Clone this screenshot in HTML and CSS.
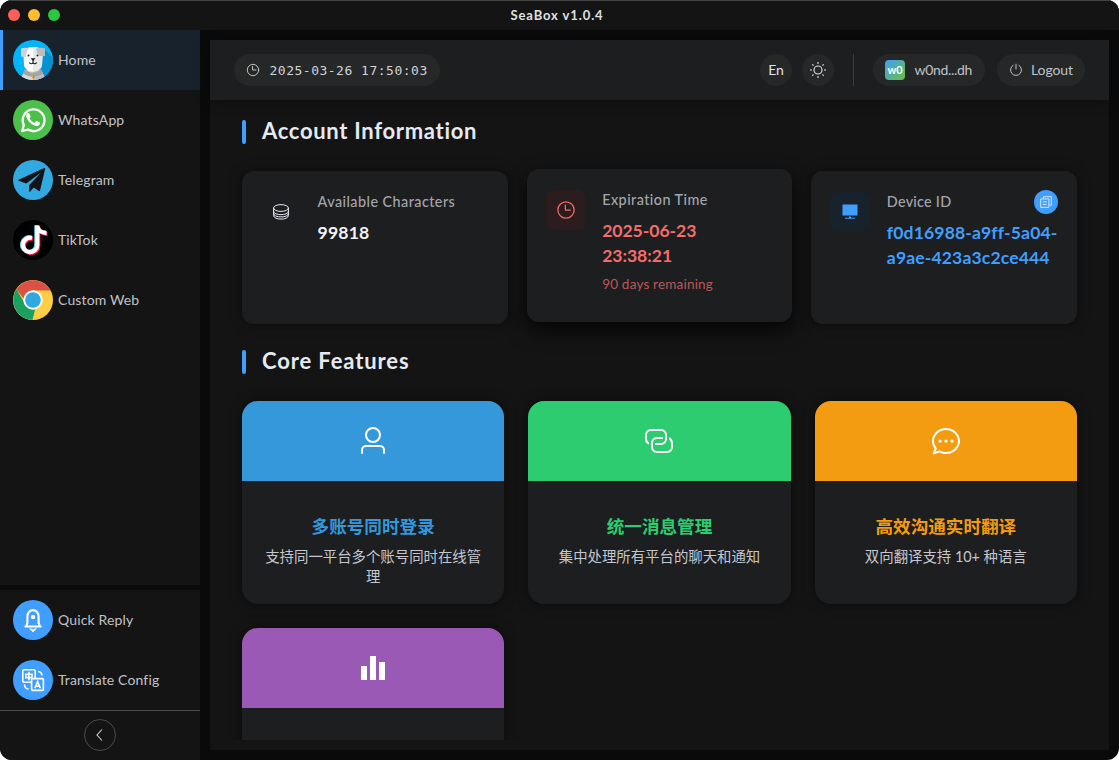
FILE: index.html
```html
<!DOCTYPE html>
<html lang="en">
<head>
<meta charset="utf-8">
<title>SeaBox v1.0.4</title>
<link rel="stylesheet" href="styles.css">
</head>
<body>
<div class="window">
  <header class="titlebar">
    <div class="lights"><i class="light red"></i><i class="light yellow"></i><i class="light green"></i></div>
    <span class="app-title">SeaBox v1.0.4</span>
  </header>
  <div class="body">
    <aside class="sidebar">
      <nav class="menu menu-top">
        <a class="item active">
          <svg class="avatar" viewBox="0 0 40 40">
            <defs><clipPath id="round"><circle cx="20" cy="20" r="20"/></clipPath></defs>
            <g clip-path="url(#round)">
              <rect width="40" height="40" fill="#03b5f8"/>
              <path d="M31 9l9 9v22H26z" fill="#0793cf"/>
              <path d="M8 40c1-5 3-9 7-11h10c4 2 6 6 8 11z" fill="#d9d9d9"/>
              <path d="M20 29h5c4 2 6 6 8 11H20z" fill="#bdbdbd"/>
              <path d="M12 29c4 5 12 5 16 0l2 4c-5 5-15 5-20 0z" fill="#a5a5a5"/>
              <path d="M10.500 16c0-6 3-8 6.500-9h6c4 1 6.500 3 6.500 9l-.5 9c-.5 4-5 6.500-9 6.500s-8.500-2.500-9-6.500z" fill="#fff"/>
              <path d="M20 7h3c4 1 6.500 3 6.500 9l-.5 9c-.5 4-5 6.500-9 6.500z" fill="#e8e8e8"/>
              <path d="M8 8.500c3-1 6-1 8 0-2 2-3 5-3 8.500l-5-.5z" fill="#d3d3d3"/>
              <path d="M23 8.500c3-1 7-1 9 0v7.500h-5c-2-1-4-4-4-7.500z" fill="#bdbdbd"/>
              <circle cx="15.500" cy="15.500" r="1" fill="#26292c"/><circle cx="24.500" cy="15.500" r="1" fill="#26292c"/>
              <path d="M17.500 18.300h5L20 21z" fill="#161616"/>
              <path d="M20 20v3M16.500 22.300c.5 2 3 2 3.500 0 .5 2 3 2 3.500 0" fill="none" stroke="#222" stroke-width="1.100"/>
              <path d="M20 34l2 2-2 3.500-2-3.500z" fill="#f0a72e"/><path d="M20 34l2 2-2 3.500z" fill="#4ab2e8"/>
            </g>
          </svg>
          <span>Home</span>
        </a>
        <a class="item">
          <svg class="avatar" viewBox="0 0 40 40">
            <circle cx="20" cy="20" r="20" fill="#4bc04b"/>
            <path d="M9.200 31l1.600-6A10.900 10.900 0 1 1 15 29.600z" fill="none" stroke="#fff" stroke-width="2.300" stroke-linejoin="round"/>
            <path d="M16.300 13.800c-.4-.8-.8-.8-1.300-.7-1.400.5-2.100 1.700-1.800 3.400.5 2.400 2.500 5.300 5.400 7.400 2.600 1.800 5.200 2.700 6.900 1.700 1.200-.7 1.600-1.800 1.400-2.800-.1-.4-3.100-1.900-3.600-1.800-.7.200-1.300 1.900-1.900 1.900-1.300-.2-4.300-2.900-4.800-4.300-.1-.5 1-1.400 1-2.100 0-.4-1-2.200-1.300-2.700z" fill="#fff"/>
          </svg>
          <span>WhatsApp</span>
        </a>
        <a class="item">
          <svg class="avatar" viewBox="0 0 40 40">
            <circle cx="20" cy="20" r="20" fill="#32a9e0"/>
            <path d="M5.600 19.800L31.300 8.100c.7-.3 1 .1.900.7L27 30.600c-.1.600-.6.700-1.100.4l-5.200-3.500-3.700 4.200c-.4.400-.9.200-.9-.3v-6.200L28 12.500 13.300 23.500 5.600 20.700c-.5-.2-.5-.6 0-.9z" fill="#121416"/>
          </svg>
          <span>Telegram</span>
        </a>
        <a class="item">
          <svg class="avatar" viewBox="0 0 40 40">
            <circle cx="20" cy="20" r="20" fill="#000"/>
            <g fill="none" stroke-width="4.200">
              <path d="M19 18a7.200 7.200 0 1 0 5.300 6.900V5.600c.3 4 3.500 7.300 9.200 7.500" stroke="#69c9d0" transform="translate(-1 -.4)"/>
              <path d="M19 18a7.200 7.200 0 1 0 5.300 6.900V5.600c.3 4 3.500 7.300 9.200 7.500" stroke="#fb1d53" transform="translate(1 1)"/>
              <path d="M19 18a7.200 7.200 0 1 0 5.300 6.900V5.600c.3 4 3.500 7.300 9.200 7.500" stroke="#fff"/>
            </g>
          </svg>
          <span>TikTok</span>
        </a>
        <a class="item">
          <svg class="avatar" viewBox="0 0 40 40">
            <circle cx="20" cy="20" r="20" fill="#ffce44"/>
            <path d="M3.500 9.300A20 20 0 0 1 37.600 10.500H20l-9.500 8z" fill="#dd5144"/>
            <path d="M3.500 9.300A20 20 0 0 0 19.500 40l2.700-11L12 24z" fill="#1aa15f"/>
            <circle cx="20" cy="20" r="9.700" fill="#fff"/><circle cx="20" cy="20" r="7.800" fill="#30a8e0"/>
          </svg>
          <span>Custom Web</span>
        </a>
      </nav>
      <nav class="menu menu-bottom">
        <a class="item">
          <svg class="avatar" viewBox="0 0 40 40">
            <circle cx="20" cy="20" r="20" fill="#409eff"/>
            <path d="M13.400 25.500l1-2.500v-6.500c0-3.500 2.400-6.400 5.600-6.400s5.600 2.900 5.600 6.400V23l1 2.500M11.500 26.500h17" fill="none" stroke="#fff" stroke-width="2.100"/>
            <path d="M15.800 28.600h8.400L20 32.300z" fill="#fff"/><path d="M18.500 28h3L20 29.700z" fill="#409eff"/>
            <circle cx="20" cy="17" r="2.200" fill="#fff"/>
          </svg>
          <span>Quick Reply</span>
        </a>
        <a class="item">
          <svg class="avatar" viewBox="0 0 40 40">
            <circle cx="20" cy="20" r="20" fill="#409eff"/>
            <g fill="none" stroke="#fff" stroke-width="1.600">
              <rect x="9.800" y="9.800" width="12.400" height="12.400" rx="1.200"/>
              <path d="M12.800 14.200h6.200v3.400h-6.200zM15.900 11.800v8.400"/>
              <path d="M25 11.500c2.400.2 3.800 1.600 4 4M11.500 24.500c.2 2.800 1.400 4.300 4 4.500"/>
              <rect x="18.600" y="18.600" width="11.800" height="11.800" rx="1" fill="#409eff"/>
              <path d="M21.900 28.300l2.700-6.800 2.700 6.800M22.700 26.300h3.800"/>
            </g>
          </svg>
          <span>Translate Config</span>
        </a>
      </nav>
      <div class="collapse">
        <button class="collapse-btn"><svg viewBox="0 0 16 16"><path d="M10 2.500L5 8l5 5.500"/></svg></button>
      </div>
    </aside>

    <main class="main">
      <div class="topbar">
        <div class="pill time">
          <svg class="ico13" viewBox="0 0 1024 1024"><g class="line"><circle cx="512" cy="512" r="416"/><path d="M480 256v256h256"/></g></svg>
          <span>2025-03-26 17:50:03</span>
        </div>
        <div class="actions">
          <div class="round lang"><span>En</span></div>
          <div class="round sun">
            <svg class="ico16" viewBox="0 0 16 16"><circle cx="8" cy="8" r="4"/><path d="M8 0v2M8 14v2M0 8h2M14 8h2M2.300 2.300l1.200 1.200M12.500 12.500l1.200 1.200M2.300 13.700l1.200-1.200M12.500 3.500l1.200-1.200"/></svg>
          </div>
          <div class="divider"></div>
          <div class="pill user"><b class="badge">w0</b><span>w0nd...dh</span></div>
          <div class="pill logout">
            <svg class="ico14" viewBox="0 0 14 14"><path d="M4.500 2.200a5.400 5.400 0 1 0 5 0M7 .8v5.600"/></svg>
            <span>Logout</span>
          </div>
        </div>
      </div>

      <div class="content">
        <h2 class="section-title"><i class="bar"></i><span>Account Information</span></h2>
        <section class="account">
          <article class="info">
            <div class="info-icon">
              <svg class="coins" viewBox="0 0 16 16"><ellipse cx="8" cy="4" rx="7.400" ry="3.400"/><path d="M.6 4v7.500C.6 16.300 15.400 16.300 15.400 11.500V4M.6 7.200c0 4.600 14.800 4.600 14.800 0M.6 9.600c0 4.400 14.800 4.400 14.800 0"/></svg>
            </div>
            <div class="info-text">
              <div class="label"><span>Available Characters</span></div>
              <div class="value">99818</div>
            </div>
          </article>
          <article class="info raised">
            <div class="info-icon red-box">
              <svg class="ico20" viewBox="0 0 1024 1024"><g class="line"><circle cx="512" cy="512" r="416"/><path d="M480 256v256h256"/></g></svg>
            </div>
            <div class="info-text">
              <div class="label"><span>Expiration Time</span></div>
              <div class="value danger">2025-06-23<br>23:38:21</div>
              <div class="remaining">90 days remaining</div>
            </div>
          </article>
          <article class="info">
            <div class="info-icon blue-box">
              <svg class="ico20" viewBox="0 0 20 20"><path d="M2.500 2.500h15v11h-15zM9 14.500h2v1.200h4v1H5v-1h4z" fill="#409eff"/></svg>
            </div>
            <div class="info-text">
              <div class="label device"><span>Device ID</span>
                <button class="copy"><svg viewBox="0 0 12 12"><path d="M3.300 2.600V.7h8v8.500H9.600M.7 2.900h8.200v8.400H.7zM2.700 5.800h4.200M2.700 8.400h4.200"/></svg></button>
              </div>
              <div class="value primary">f0d16988-a9ff-5a04-<br>a9ae-423a3c2ce444</div>
            </div>
          </article>
        </section>

        <h2 class="section-title second"><i class="bar"></i><span>Core Features</span></h2>
        <section class="features">
          <article class="feature blue">
            <div class="cover"><svg class="ico32" viewBox="0 0 1024 1024"><path d="M512 512a192 192 0 1 0 0-384 192 192 0 0 0 0 384m0 64a256 256 0 1 1 0-512 256 256 0 0 1 0 512m320 320v-96a96 96 0 0 0-96-96H288a96 96 0 0 0-96 96v96a32 32 0 1 1-64 0v-96a160 160 0 0 1 160-160h448a160 160 0 0 1 160 160v96a32 32 0 1 1-64 0"/></svg></div>
            <div class="copybox"><h3>多账号同时登录</h3><p>支持同一平台多个账号同时在线管理</p></div>
          </article>
          <article class="feature green">
            <div class="cover"><svg class="ico32" viewBox="0 0 1024 1024"><path d="M640 384v64H448a128 128 0 0 0-128 128v128a128 128 0 0 0 128 128h320a128 128 0 0 0 128-128V576a128 128 0 0 0-64-110.848V394.880c74.560 26.368 128 97.472 128 181.056v128a192 192 0 0 1-192 192H448a192 192 0 0 1-192-192V576a192 192 0 0 1 192-192z"/><path d="M384 640v-64h192a128 128 0 0 0 128-128V320a128 128 0 0 0-128-128H256a128 128 0 0 0-128 128v128a128 128 0 0 0 64 110.848v70.272A192.064 192.064 0 0 1 64 448V320a192 192 0 0 1 192-192h320a192 192 0 0 1 192 192v128a192 192 0 0 1-192 192z"/></svg></div>
            <div class="copybox"><h3>统一消息管理</h3><p>集中处理所有平台的聊天和通知</p></div>
          </article>
          <article class="feature orange">
            <div class="cover"><svg class="ico32" viewBox="0 0 1024 1024"><path d="m174.720 855.680 135.296-45.120 23.680 11.840C388.096 849.536 448.576 864 512 864c211.840 0 384-166.784 384-352S723.840 160 512 160 128 326.784 128 512c0 69.120 24.960 139.264 70.848 199.232l22.080 28.800-46.272 115.584zm-45.248 82.560A32 32 0 0 1 89.600 896l58.368-145.920C94.720 680.320 64 596.864 64 512 64 299.904 256 96 512 96s448 203.904 448 416-192 416-448 416a461.056 461.056 0 0 1-206.912-48.384l-175.616 58.560z"/><circle cx="320" cy="512" r="52"/><circle cx="512" cy="512" r="52"/><circle cx="704" cy="512" r="52"/></svg></div>
            <div class="copybox"><h3>高效沟通实时翻译</h3><p>双向翻译支持 10+ 种语言</p></div>
          </article>
          <article class="feature purple">
            <div class="cover"><svg class="ico32" viewBox="0 0 1024 1024"><path d="M416 896V128h192v768zm-288 0V448h192v448zm576 0V320h192v576z"/></svg></div>
            <div class="copybox"></div>
          </article>
        </section>
      </div>
    </main>
  </div>
</div>
</body>
</html>
```
FILE: styles.css
```css
* { box-sizing: border-box; }
body { margin: 0; background: #fff; font-family: Lato, "Noto Sans CJK SC", sans-serif; color: #cfd3dc; overflow: hidden; }
h2, h3, p { margin: 0; }
button { padding: 0; border: 0; font: inherit; color: inherit; }
svg { display: block; flex: none; }

.window { width: 1119px; height: 760px; display: flex; flex-direction: column; border-radius: 12px; overflow: hidden; background: #0a0a0a; }
.titlebar { height: 30px; flex: none; display: grid; grid-template-columns: 1fr auto 1fr; align-items: center; background: #141414; box-shadow: inset 0 1px #434444; }
.lights { display: flex; gap: 8px; padding-left: 8px; margin-top: -1px; }
.light { width: 12px; height: 12px; border-radius: 50%; }
.light.red { background: #ff5f57; }
.light.yellow { background: #febc2e; }
.light.green { background: #28c840; }
.app-title { font-size: 13px; font-weight: 700; letter-spacing: .9px; color: #dfe0e2; margin-left: -5px; }
.body { flex: 1; display: flex; min-height: 0; }

.sidebar { width: 200px; flex: none; display: flex; flex-direction: column; }
.menu { background: #141414; }
.menu-top { flex: 1; }
.menu-bottom { margin-top: 5px; height: 120px; }
.item { height: 60px; display: flex; align-items: center; gap: 5px; padding-left: 13px; font-size: 14px; letter-spacing: .14px; color: #c0c3cb; }
.item.active { background: #18222c; box-shadow: inset 3px 0 #409eff; }
.item span, .pill span, .round span, .section-title span { margin-top: -2px; }
.avatar { width: 40px; height: 40px; }
.collapse { height: 50px; padding-bottom: 2px; display: flex; align-items: center; justify-content: center; background: #141414; border-top: 1px solid #4c4d4f; }
.collapse-btn { width: 32px; height: 32px; display: grid; place-items: center; border: 1px solid #4c4d4f; border-radius: 50%; background: #141414; }
.collapse-btn svg { width: 16px; height: 16px; fill: none; stroke: #cfd3dc; stroke-width: 1.1; }

.main { flex: 1; margin: 10px; background: #141414; display: flex; flex-direction: column; min-width: 0; }
.topbar { height: 60px; flex: none; padding: 0 24px; display: flex; align-items: center; justify-content: space-between; background: #1d1e1f; box-shadow: 0 2px 12px rgba(0, 0, 0, .35); position: relative; z-index: 1; font-size: 14px; color: #bfc2ca; }
.pill { height: 32px; border-radius: 16px; background: #262727; display: flex; align-items: center; }
.line { fill: none; stroke: currentColor; stroke-width: 64; stroke-linecap: round; stroke-linejoin: round; }
.time { width: 206px; padding-left: 12px; gap: 9.500px; font-family: "DejaVu Sans Mono", monospace; font-size: 13px; letter-spacing: .5px; color: #cfd3dc; white-space: nowrap; }
.pill.time span { margin-top: 0; }
.ico13 { width: 14px; height: 14px; }
.ico14 { width: 14px; height: 14px; fill: none; stroke: currentColor; stroke-width: 1; }
.ico16 { width: 16px; height: 16px; fill: none; stroke: #dfe3ec; stroke-width: 1.1; }
.ico20 { width: 20px; height: 20px; }
.ico32 { width: 32px; height: 32px; fill: #fff; }
.actions { display: flex; align-items: center; }
.round { width: 32px; height: 32px; border-radius: 50%; background: #262727; display: grid; place-items: center; color: #dfe3ec; }
.sun { margin-left: 10px; }
.divider { width: 1px; height: 32px; background: #3a3b3c; margin: 0 19px; }
.user { width: 112px; padding-left: 12px; gap: 9.500px; letter-spacing: -.3px; }
.badge { width: 20px; height: 20px; border-radius: 4px; background: linear-gradient(135deg, #409eff, #67c23a); color: #fff; font-size: 11px; font-weight: 700; letter-spacing: 0; line-height: 19px; text-align: center; }
.logout { width: 88px; margin-left: 12px; padding-left: 12px; gap: 8px; letter-spacing: -.1px; }

.content { height: 640px; flex: none; overflow: hidden; padding: 20px 32px 0; }
.section-title { height: 24px; display: flex; align-items: center; gap: 16px; font-size: 22px; line-height: 24px; font-weight: 700; color: #e5eaf3; letter-spacing: .7px; }
.section-title.second { margin-top: 26px; letter-spacing: .88px; }
.bar { width: 4px; height: 24px; border-radius: 2px; background: #409eff; }

.account { display: grid; grid-template-columns: repeat(3, minmax(0, 1fr)); gap: 19px; margin-top: 27px; }
.info { height: 153px; border-radius: 12px; background: #1d1e1f; padding: 20px 19px; display: flex; gap: 16.500px; box-shadow: 0 0 12px rgba(0, 0, 0, .5); }
.raised { transform: translateY(-2px); box-shadow: 0 8px 20px rgba(0, 0, 0, .8); }
.info-icon { width: 40px; height: 40px; margin-top: 1px; flex: none; border-radius: 8px; display: grid; place-items: center; }
.red-box { background: #2b1d1d; color: #f56c6c; }
.blue-box { background: #18222c; }
.coins { width: 16px; height: 16px; fill: none; stroke: #e5eaf3; stroke-width: 1; }
.info-text { flex: 1; min-width: 0; }
.label { height: 20px; margin-bottom: 9px; display: flex; justify-content: space-between; align-items: center; font-size: 14.4px; font-weight: 500; letter-spacing: .44px; color: #a3a6ad; }
.label.device { letter-spacing: .25px; }
.value { font-size: 17.6px; line-height: 25px; font-weight: 700; letter-spacing: .2px; color: #f0f3fa; white-space: nowrap; }
.value.danger { color: #f56c6c; letter-spacing: -.05px; }
.value.primary { color: #409eff; letter-spacing: .12px; }
.remaining { margin-top: 6px; font-size: 13.5px; line-height: 20px; letter-spacing: .2px; color: #bc5858; }
.copy { width: 24px; height: 24px; border-radius: 50%; background: #409eff; display: grid; place-items: center; margin-top: 1px; }
.copy svg { width: 12px; height: 12px; fill: none; stroke: #e2efff; stroke-width: .9; }

.features { display: grid; grid-template-columns: repeat(3, minmax(0, 1fr)); gap: 24px; margin-top: 27px; }
.feature { height: 203px; border-radius: 16px; overflow: hidden; background: #1d1e1f; box-shadow: 0 0 12px rgba(0, 0, 0, .5); }
.cover { height: 80px; display: grid; place-items: center; }
.copybox { padding: 34px 19px 0; text-align: center; }
.copybox h3 { font-size: 17.6px; line-height: 24px; font-weight: 700; margin-bottom: 8px; }
.copybox p { font-size: 14.4px; line-height: 20px; color: #c4c7cf; font-weight: 400; }
.blue .cover { background: #3498db; }
.blue h3 { color: #3498db; }
.green .cover { background: #2ecc71; }
.green h3 { color: #2ecc71; }
.orange .cover { background: #f39c12; }
.orange h3 { color: #f39c12; }
.purple .cover { background: #9b59b6; }
```
